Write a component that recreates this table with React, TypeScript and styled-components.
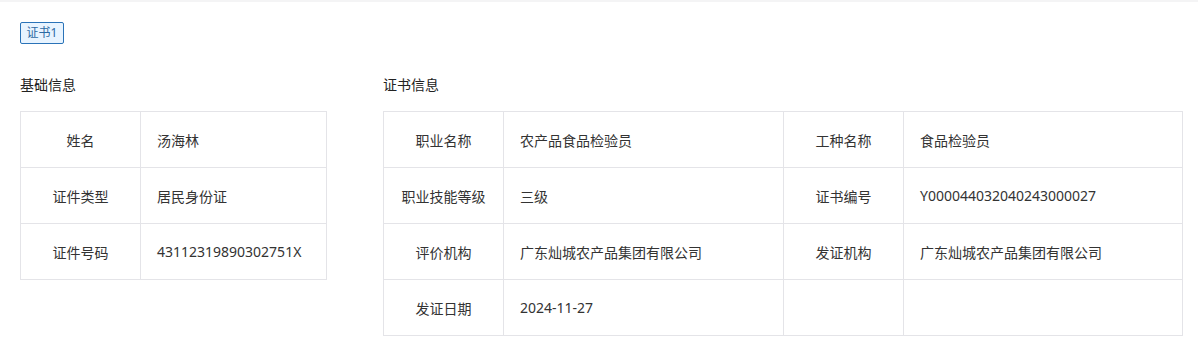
import React from "react";
import styled, { createGlobalStyle } from "styled-components";

const GlobalStyle = createGlobalStyle`
  html, body { margin: 0; padding: 0; background: #fff; }
  body {
    font-family: "Noto Sans", "Noto Sans CJK SC", sans-serif;
    color: #333;
  }
`;

const Page = styled.div`
  border-top: 2px solid #f4f4f5;
  padding: 20px 15px 0 20px;
  box-sizing: border-box;
  width: 1198px;
`;

const Tag = styled.div`
  display: flex;
  align-items: center;
  justify-content: center;
  box-sizing: border-box;
  width: 44px;
  height: 22px;
  border: 1px solid #2a73b8;
  border-radius: 2px;
  background: #e8f4ff;
  color: #2d6aa3;
  font-size: 12px;
  line-height: 1;
`;

const Panels = styled.div`
  display: flex;
  gap: 56px;
  margin-top: 29px;
`;

const Section = styled.section<{ $width?: number }>`
  ${(p) => (p.$width ? `width: ${p.$width}px; flex: none;` : "flex: 1;")}
`;

const Title = styled.h3`
  margin: 0;
  font-size: 14px;
  font-weight: 400;
  line-height: 24px;
  height: 24px;
  color: #222;
`;

const Table = styled.div<{ $cols: string }>`
  margin-top: 14px;
  display: grid;
  grid-template-columns: ${(p) => p.$cols};
  border-top: 1px solid #e4e4e8;
  border-left: 1px solid #e4e4e8;
`;

const Cell = styled.div<{ $label?: boolean }>`
  height: 56px;
  box-sizing: border-box;
  border-right: 1px solid #e4e4e8;
  border-bottom: 1px solid #e4e4e8;
  display: flex;
  align-items: center;
  justify-content: ${(p) => (p.$label ? "center" : "flex-start")};
  padding: ${(p) => (p.$label ? "0" : "0 16px")};
  font-size: 14px;
  color: #333;
  white-space: nowrap;
`;

const basic: [string, string][] = [
  ["姓名", "汤海林"],
  ["证件类型", "居民身份证"],
  ["证件号码", "43112319890302751X"],
];

const cert: [string, string][] = [
  ["职业名称", "农产品食品检验员"],
  ["工种名称", "食品检验员"],
  ["职业技能等级", "三级"],
  ["证书编号", "Y000044032040243000027"],
  ["评价机构", "广东灿城农产品集团有限公司"],
  ["发证机构", "广东灿城农产品集团有限公司"],
  ["发证日期", "2024-11-27"],
  ["", ""],
];

export default function App() {
  return (
    <>
      <GlobalStyle />
      <Page>
        <Tag>证书1</Tag>
        <Panels>
          <Section $width={307}>
            <Title>基础信息</Title>
            <Table $cols="120px 1fr">
              {basic.map(([k, v]) => (
                <React.Fragment key={k}>
                  <Cell $label>{k}</Cell>
                  <Cell>{v}</Cell>
                </React.Fragment>
              ))}
            </Table>
          </Section>
          <Section>
            <Title>证书信息</Title>
            <Table $cols="120px 280px 120px 1fr">
              {cert.map(([k, v], i) => (
                <React.Fragment key={i}>
                  <Cell $label>{k}</Cell>
                  <Cell>{v}</Cell>
                </React.Fragment>
              ))}
            </Table>
          </Section>
        </Panels>
      </Page>
    </>
  );
}
